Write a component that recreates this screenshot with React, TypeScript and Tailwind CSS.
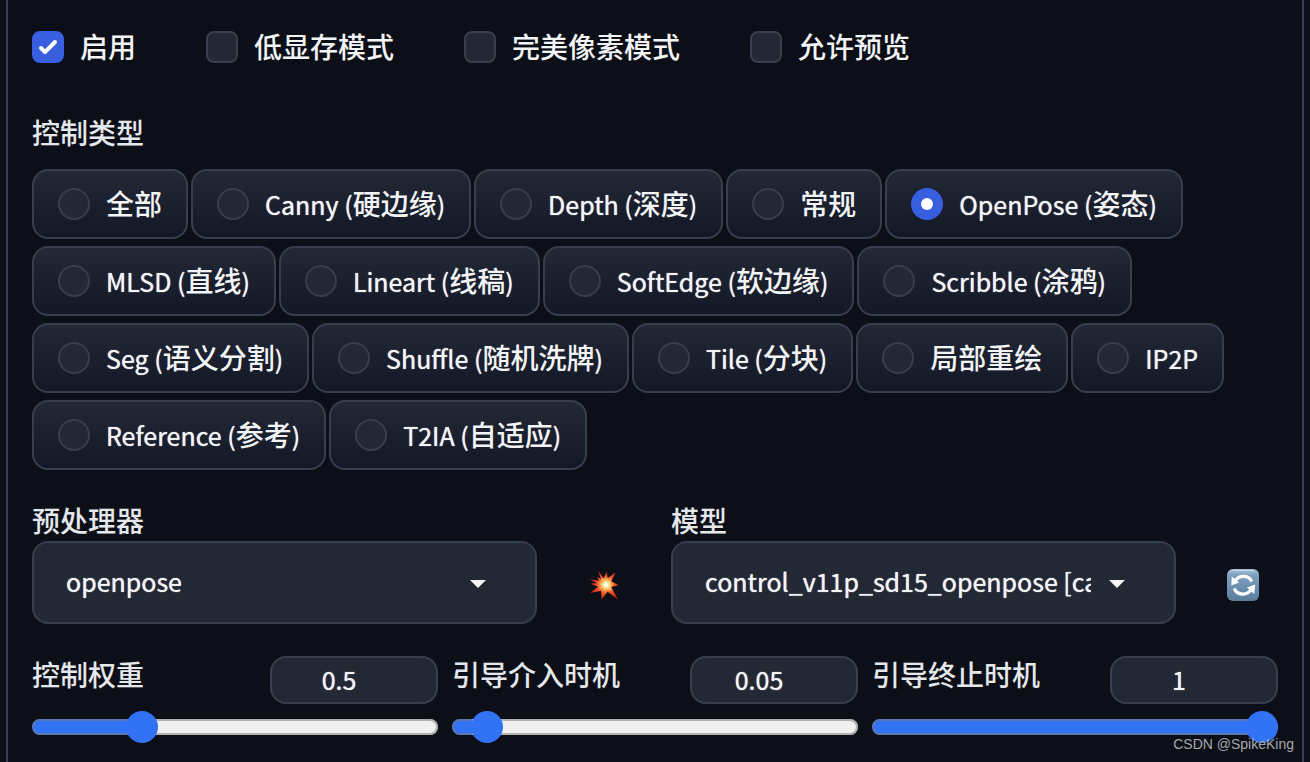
import React, { useState } from 'react';

const CONTROL_TYPES = [
  '全部',
  'Canny (硬边缘)',
  'Depth (深度)',
  '常规',
  'OpenPose (姿态)',
  'MLSD (直线)',
  'Lineart (线稿)',
  'SoftEdge (软边缘)',
  'Scribble (涂鸦)',
  'Seg (语义分割)',
  'Shuffle (随机洗牌)',
  'Tile (分块)',
  '局部重绘',
  'IP2P',
  'Reference (参考)',
  'T2IA (自适应)',
];

// Latin letters sit slightly smaller than the Chinese ones next to them
function MixedText({ text }: { text: string }) {
  const parts = text.split(/([\u4e00-\u9fff]+)/).filter(Boolean);
  return (
    <span className="pb-0.5 leading-[38px] whitespace-pre">
      {parts.map((part, i) => (
        <span
          key={i}
          className={/[\u4e00-\u9fff]/.test(part) ? 'text-[28px] font-medium' : 'text-[25px] [text-shadow:0_0_1px_currentColor]'}
        >
          {part}
        </span>
      ))}
    </span>
  );
}

interface CheckProps {
  label: string;
  initial?: boolean;
}

function Check({ label, initial = false }: CheckProps) {
  const [checked, setChecked] = useState(initial);
  return (
    <label className="flex items-center gap-4 text-gray-100">
      <span className="relative flex">
        <input
          type="checkbox"
          checked={checked}
          onChange={e => setChecked(e.target.checked)}
          className="size-8 appearance-none rounded-lg border-2 border-[#373e4d] bg-[#222834] checked:border-[#375fe0] checked:bg-[#375fe0]"
        />
        {checked && (
          <svg viewBox="0 0 16 16" className="pointer-events-none absolute inset-0 size-8" fill="white">
            <path d="M12.207 4.793a1 1 0 010 1.414l-5 5a1 1 0 01-1.414 0l-2-2a1 1 0 011.414-1.414L6.5 9.086l4.293-4.293a1 1 0 011.414 0z" />
          </svg>
        )}
      </span>
      <MixedText text={label} />
    </label>
  );
}

interface DropdownProps {
  id: string;
  label: string;
  options: string[];
  action: string;
  icon: React.ReactNode;
}

function Dropdown({ id, label, options, action, icon }: DropdownProps) {
  return (
    <div>
      <label htmlFor={id} className="block pb-0.5 leading-[38px] font-medium">{label}</label>
      <div className="flex items-center">
        <div className="relative min-w-0 flex-1">
          <select
            id={id}
            className="block h-[83px] w-full appearance-none overflow-hidden rounded-2xl border-2 border-[#373e4d] bg-[#222834] pr-[83px] pb-1 pl-8 text-[25px] text-gray-100 [text-shadow:0_0_1px_currentColor]"
          >
            {options.map(o => <option key={o}>{o}</option>)}
          </select>
          <svg viewBox="0 0 16 8" className="pointer-events-none absolute top-[39px] right-[51px] h-2 w-4" fill="#f3f4f6">
            <path d="M0 0h16L8 8z" />
          </svg>
        </div>
        <button type="button" aria-label={action} className="ml-8 flex h-[83px] w-[70px] items-center justify-center pt-1">
          {icon}
        </button>
      </div>
    </div>
  );
}

function CollisionIcon() {
  return (
    <svg viewBox="30 30 90 90" className="size-[30px]">
      <defs>
        <radialGradient id="burst" gradientUnits="userSpaceOnUse" cx="81" cy="74" r="44">
          <stop offset="0" stopColor="#fff" />
          <stop offset="0.16" stopColor="#fff3b8" />
          <stop offset="0.34" stopColor="#ffa94d" />
          <stop offset="0.6" stopColor="#f4562c" />
          <stop offset="1" stopColor="#d92313" />
        </radialGradient>
      </defs>
      <path
        fill="url(#burst)"
        d="M57 32L74 55L83 36L86 55L110 37L97 64L118 75L97 81L116 118L86 95L68 118L66 92L34 99L57 80L35 71L54 69L32 58L60 62L55 51L66 57Z"
      />
      <path fill="#ffe08a" d="M72 56L80 66L85 56L87 66L97 60L91 72L102 76L91 79L99 92L83 84L75 92L75 82L62 85L71 77L60 71L73 70Z" opacity=".6" />
      <circle cx="81" cy="74" r="6" fill="#fff" />
    </svg>
  );
}

function RefreshIcon() {
  return (
    <svg viewBox="0 0 32 32" className="size-8">
      <defs>
        <linearGradient id="tile" x1="0" y1="0" x2="0" y2="1">
          <stop offset="0" stopColor="#a9c3d8" />
          <stop offset="0.2" stopColor="#7b9fbf" />
          <stop offset="1" stopColor="#5c7d9c" />
        </linearGradient>
      </defs>
      <rect width="32" height="32" rx="6" fill="url(#tile)" />
      <path d="M5 1.500h22" stroke="#c4d6e4" strokeLinecap="round" />
      <g fill="none" stroke="#fff" strokeWidth="3.200">
        <path d="M24.800 12.500A9.500 9.500 0 0 0 8 12.500" />
        <path d="M7.200 19.500A9.500 9.500 0 0 0 24 20.500" />
      </g>
      <path fill="#fff" d="M4.800 7.500L4.300 16.500L12 13.500ZM28.200 15.500L20 18.500L27.200 25Z" />
    </svg>
  );
}

interface SliderFieldProps {
  id: string;
  label: string;
  initial: number;
  max: number;
}

function SliderField({ id, label, initial, max }: SliderFieldProps) {
  const [value, setValue] = useState(initial);
  const ratio = value / max;

  return (
    <div>
      <div className="flex items-start justify-between">
        <label htmlFor={id} className="leading-9 font-medium">{label}</label>
        <input
          type="number"
          aria-label={label}
          value={value}
          min={0}
          max={max}
          step={0.05}
          onChange={e => setValue(Number(e.target.value))}
          className="h-12 w-[168px] appearance-none rounded-2xl border-2 border-[#373e4d] bg-[#222834] pr-[30px] pb-0.5 text-center text-[25px] text-gray-100 [appearance:textfield] [text-shadow:0_0_1px_currentColor] [&::-webkit-inner-spin-button]:appearance-none"
        />
      </div>
      <input
        id={id}
        type="range"
        min={0}
        max={max}
        step={0.05}
        value={value}
        onChange={e => setValue(Number(e.target.value))}
        style={{
          backgroundImage: `linear-gradient(to right, #3272f5 ${ratio * 100}%, #efefef ${ratio * 100}%)`,
        }}
        className="mt-[15px] block h-4 w-full appearance-none rounded-lg shadow-[inset_0_0_0_2px_rgba(125,125,125,0.55)] [&::-webkit-slider-thumb]:size-8 [&::-webkit-slider-thumb]:appearance-none [&::-webkit-slider-thumb]:rounded-full [&::-webkit-slider-thumb]:bg-[#3272f5]"
      />
    </div>
  );
}

export default function App() {
  const [controlType, setControlType] = useState('OpenPose (姿态)');

  return (
    <div className="relative flex min-h-screen bg-[#0c0f18] px-[6px] font-['Noto_Sans_CJK_SC',sans-serif] text-[28px] leading-10 text-gray-200">
      <main className="min-w-0 flex-1 border-x-2 border-[#373e4d] px-6 pt-[27px]">
        <div className="flex flex-wrap gap-x-[70px]">
          <Check label="启用" initial />
          <Check label="低显存模式" />
          <Check label="完美像素模式" />
          <Check label="允许预览" />
        </div>

        <fieldset className="mt-[46px]">
          <legend className="mb-4 pb-0.5 leading-[38px] font-medium">控制类型</legend>
          <div className="flex flex-wrap gap-x-[3px] gap-y-[7px]">
            {CONTROL_TYPES.map(type => (
              <label
                key={type}
                className="flex h-[70px] items-center gap-4 rounded-2xl border-2 border-[#373e4d] bg-linear-to-b from-[#222834] to-[#131827] px-6 whitespace-nowrap text-gray-100"
              >
                <span className="relative flex">
                  <input
                    type="radio"
                    name="control-type"
                    checked={controlType === type}
                    onChange={() => setControlType(type)}
                    className="size-8 appearance-none rounded-full border-2 border-[#373e4d] bg-[#222834] checked:border-[#375fe0] checked:bg-[#375fe0]"
                  />
                  {controlType === type && (
                    <span className="pointer-events-none absolute inset-0 m-auto size-3 rounded-full bg-white" />
                  )}
                </span>
                <MixedText text={type} />
              </label>
            ))}
          </div>
        </fieldset>

        <div className="mt-[31px] grid grid-cols-2 gap-8">
          <Dropdown
            id="preprocessor"
            label="预处理器"
            options={['openpose']}
            action="运行预处理器"
            icon={<CollisionIcon />}
          />
          <Dropdown
            id="model"
            label="模型"
            options={['control_v11p_sd15_openpose [cab727d4]']}
            action="刷新模型"
            icon={<RefreshIcon />}
          />
        </div>

        <div className="mt-8 grid grid-cols-3 gap-[14px]">
          <SliderField id="weight" label="控制权重" initial={0.5} max={2} />
          <SliderField id="guidance-start" label="引导介入时机" initial={0.05} max={1} />
          <SliderField id="guidance-end" label="引导终止时机" initial={1} max={1} />
        </div>
      </main>
      <span className="pointer-events-none absolute right-4 bottom-2 font-['Liberation_Sans',sans-serif] text-sm text-[#a6a8ac]">
        CSDN @SpikeKing
      </span>
    </div>
  );
}
